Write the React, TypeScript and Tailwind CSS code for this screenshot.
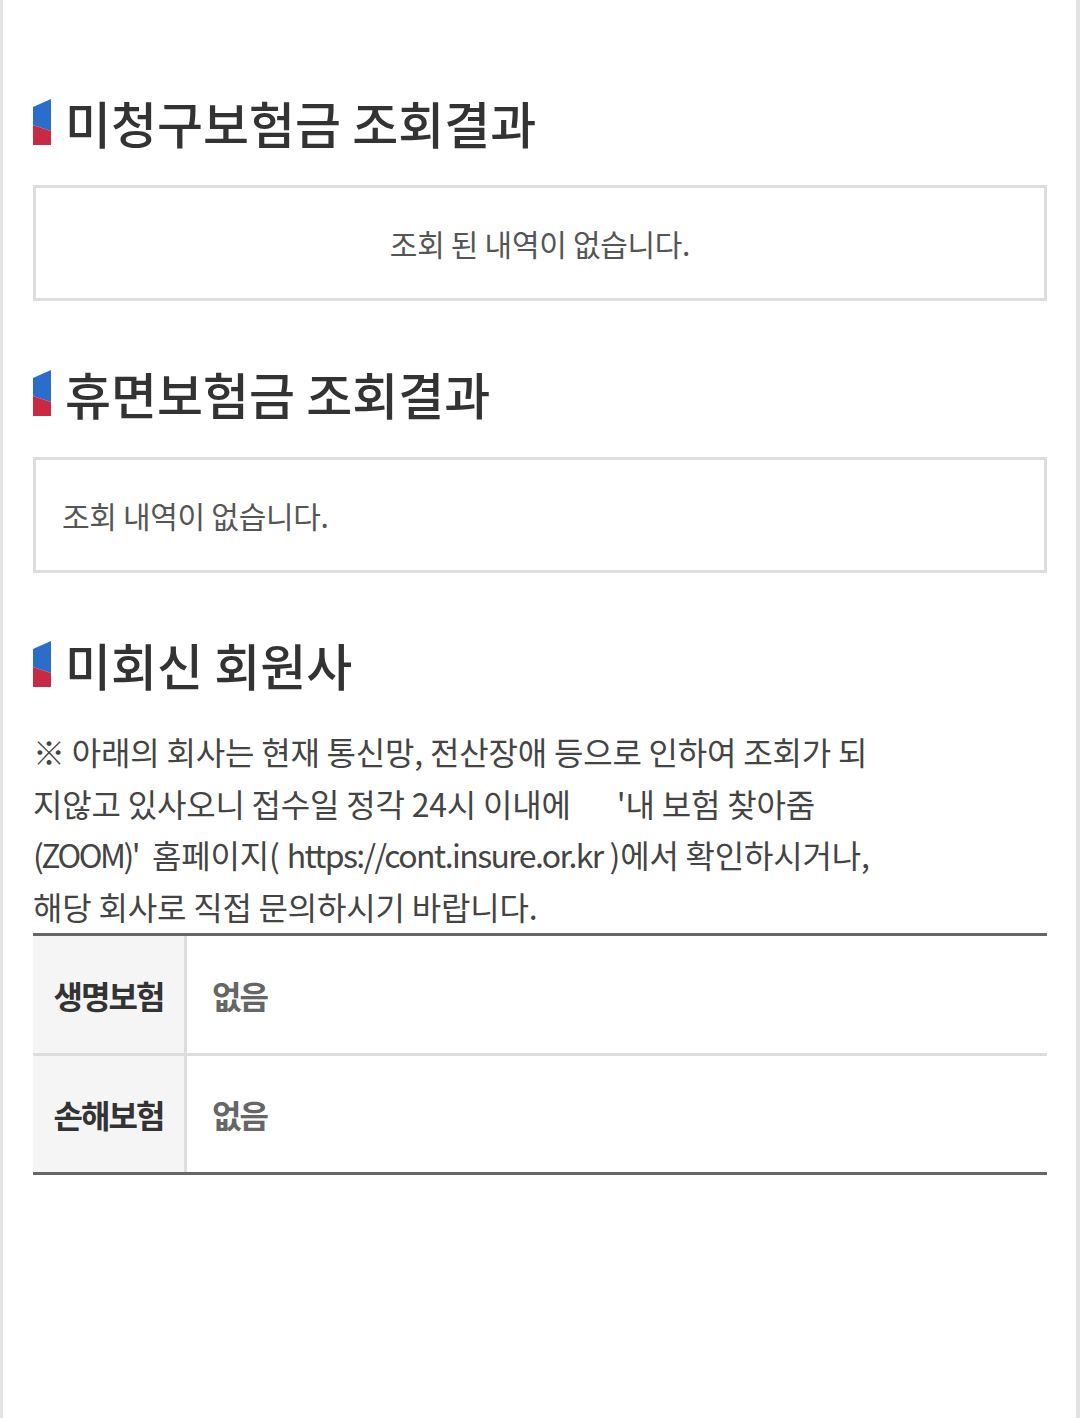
import React from "react";

const font = { fontFamily: '"Noto Sans CJK KR", "Noto Sans", sans-serif' };

function TitleMark() {
  return (
    <svg width="18" height="46" viewBox="0 0 18 46" className="shrink-0">
      <polygon points="0,8 18,0 18,32 0,26" fill="#2b6dcb" />
      <polygon points="0,26 18,32 18,46 0,46" fill="#c72a42" />
    </svg>
  );
}

function SectionTitle({ children }: { children: React.ReactNode }) {
  return (
    <h2 className="flex items-center gap-[14px] h-[60px]">
      <TitleMark />
      <span className="text-[50px] font-medium text-[#333] leading-[60px] whitespace-pre">
        {children}
      </span>
    </h2>
  );
}

export default function App() {
  return (
    <div
      style={font}
      className="min-h-[1418px] bg-white border-l-[3px] border-r-[4px] border-[#e2e2e2] pl-[30px] pr-[29px] pt-[92px]"
    >
      {/* 미청구보험금 */}
      <SectionTitle>미청구보험금 조회결과</SectionTitle>
      <div className="mt-[33px] h-[116px] border-[3px] border-[#dddddd] flex items-center justify-center">
        <p className="text-[30px] tracking-[-0.3px] text-[#555]">조회 된 내역이 없습니다.</p>
      </div>

      {/* 휴면보험금 */}
      <div className="mt-[62px]">
        <SectionTitle>휴면보험금 조회결과</SectionTitle>
      </div>
      <div className="mt-[34px] h-[116px] border-[3px] border-[#dddddd] flex items-center pl-[26px]">
        <p className="text-[30px] tracking-[-0.3px] text-[#555]">조회 내역이 없습니다.</p>
      </div>

      {/* 미회신 회원사 */}
      <div className="mt-[61px]">
        <SectionTitle>미회신 회원사</SectionTitle>
      </div>
      <p className="mt-[32px] text-[32px] tracking-[-0.2px] leading-[51.5px] text-[#444]">
        ※ 아래의 회사는 현재 통신망, 전산장애 등으로 인하여 조회가 되
        <br />
        지않고 있사오니 접수일 정각 24시 이내에
        <span className="inline-block w-[46px]" />
        '내 보험 찾아줌
        <br />
        <span className="tracking-[-2.5px]">(ZOOM)'</span>
        <span className="inline-block w-[14px]" />
        홈페이지({" "}
        <span className="tracking-[-1.6px]">https://cont.insure.or.kr</span> )에서 확인하시거나,
        <br />
        해당 회사로 직접 문의하시기 바랍니다.
      </p>

      <div className="mt-[1px] border-y-[3px] border-[#666]">
        {[
          { label: "생명보험", value: "없음" },
          { label: "손해보험", value: "없음" },
        ].map((row, i) => (
          <div
            key={row.label}
            className={`flex ${i > 0 ? "h-[119px] border-t-[3px] border-[#dddddd]" : "h-[117px]"}`}
          >
            <div className="w-[154px] shrink-0 bg-[#f5f5f5] border-r-[3px] border-[#dddddd] flex items-center justify-center">
              <span className="text-[32px] font-bold tracking-[-2px] text-[#333]">{row.label}</span>
            </div>
            <div className="flex items-center pl-[25px]">
              <span className="text-[32px] font-bold tracking-[-2px] text-[#666]">{row.value}</span>
            </div>
          </div>
        ))}
      </div>
    </div>
  );
}
